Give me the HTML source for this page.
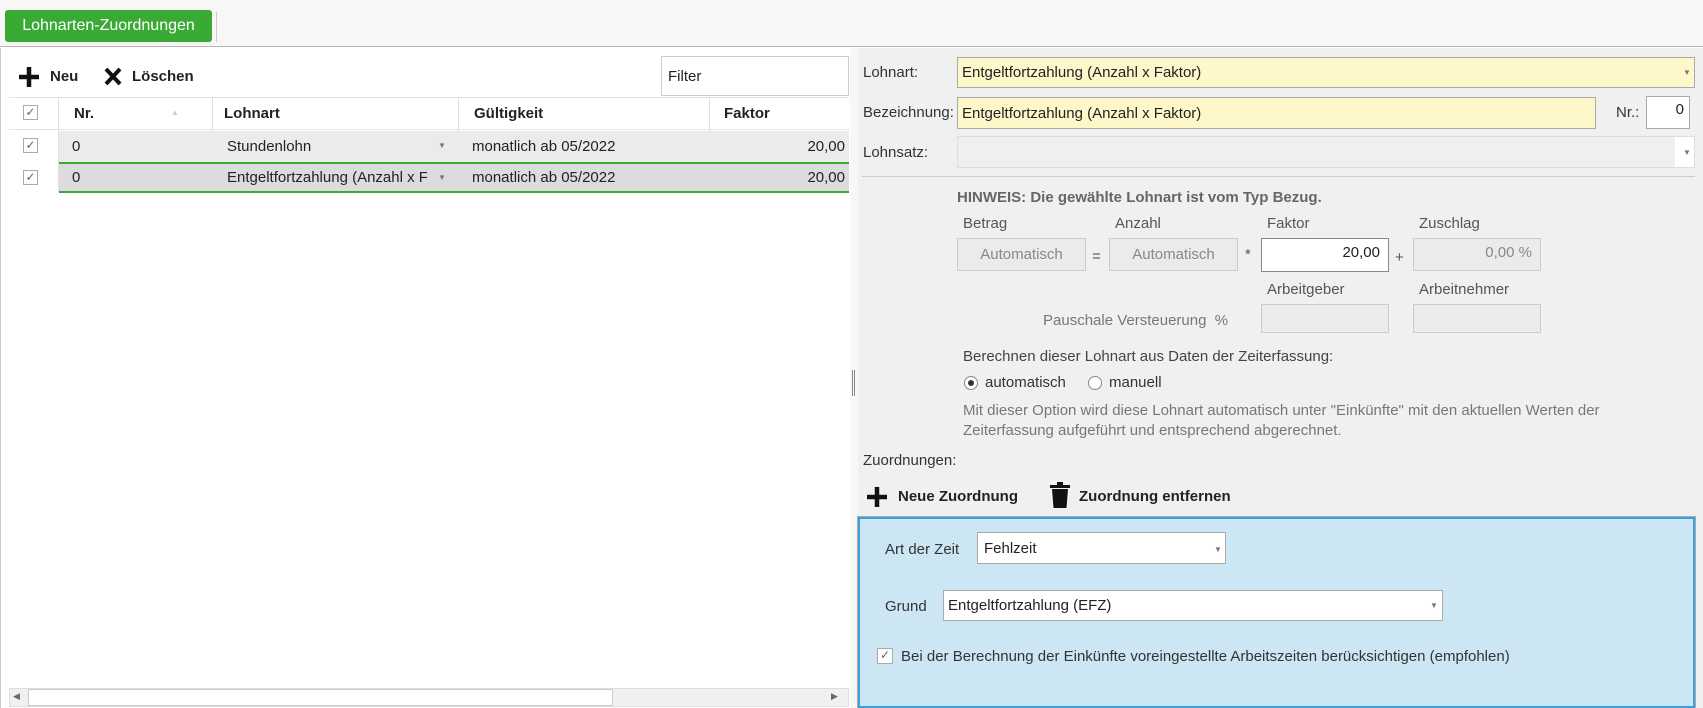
<!DOCTYPE html>
<html><head><meta charset="utf-8"><style>
*{box-sizing:border-box;margin:0;padding:0}
body{width:1703px;height:708px;overflow:hidden;background:#fff;font-family:"Liberation Sans",sans-serif;font-size:15px;color:#222;position:relative}
.a{position:absolute}
.top{left:0;top:0;width:1703px;height:47px;background:#f7f7f7;border-bottom:1px solid #b5b5b5}
.btn{left:5px;top:10px;width:207px;height:32px;background:#3aaa35;border-radius:3px;color:#fff;font-size:16px;line-height:32px;text-align:center}
.hdr{font-weight:bold;font-size:15px}
.cell{position:absolute;line-height:30px;white-space:nowrap;overflow:hidden}
.chk{width:15px;height:15px;border:1px solid #aaa;background:#fff;position:absolute;font-size:12px;line-height:13px;text-align:center;color:#666}
.right{left:858px;top:48px;width:845px;height:660px;background:#f0f0f0}
.lbl{color:#333}
.box{position:absolute;border:1px solid #ccc;background:#ebebeb;color:#888;text-align:center}
.tri{position:absolute;font-size:8px;color:#777}
</style></head><body>
<div class="a top"></div>
<div class="a btn">Lohnarten-Zuordnungen</div>
<div class="a" style="left:216px;top:12px;width:1px;height:30px;background:#ccc"></div>

<div class="a" style="left:0;top:48px;width:850px;height:660px;border-left:1px solid #ccc;background:#fff"></div>
<svg class="a" style="left:18px;top:66px" width="22" height="22" viewBox="0 0 22 22"><path d="M11 1v20M1 11h20" stroke="#111" stroke-width="4.5"/></svg>
<div class="a hdr" style="left:50px;top:68px">Neu</div>
<svg class="a" style="left:104px;top:67px" width="18" height="19" viewBox="0 0 18 19"><path d="M2 2l14 15M16 2L2 17" stroke="#111" stroke-width="4"/></svg>
<div class="a hdr" style="left:132px;top:68px">Löschen</div>
<div class="a" style="left:661px;top:56px;width:188px;height:40px;border:1px solid #ccc;background:#fff;padding:11px 6px">Filter</div>

<div class="a" style="left:9px;top:97px;width:840px;height:33px;border-bottom:1px solid #e3e3e3;border-top:1px solid #e3e3e3"></div>
<div class="a" style="left:58px;top:97px;width:1px;height:95px;background:#e0e0e0"></div>
<div class="a" style="left:212px;top:97px;width:1px;height:95px;background:#e0e0e0"></div>
<div class="a" style="left:458px;top:97px;width:1px;height:95px;background:#e0e0e0"></div>
<div class="a" style="left:709px;top:97px;width:1px;height:95px;background:#e0e0e0"></div>
<div class="chk" style="left:23px;top:105px">✓</div>
<div class="cell hdr" style="left:74px;top:99px">Nr.</div>
<div class="a" style="left:171px;top:108px;font-size:8px;color:#ccc">▲</div>
<div class="cell hdr" style="left:224px;top:99px">Lohnart</div>
<div class="cell hdr" style="left:474px;top:99px">Gültigkeit</div>
<div class="cell hdr" style="left:724px;top:99px">Faktor</div>

<div class="a" style="left:59px;top:131px;width:790px;height:31px;background:#ebebeb"></div>
<div class="chk" style="left:23px;top:138px">✓</div>
<div class="cell" style="left:72px;top:132px">0</div>
<div class="cell" style="left:227px;top:132px">Stundenlohn</div>
<div class="tri" style="left:438px;top:141px">▼</div>
<div class="cell" style="left:472px;top:132px">monatlich ab 05/2022</div>
<div class="cell" style="left:700px;top:132px;width:145px;text-align:right">20,00</div>

<div class="a" style="left:59px;top:162px;width:790px;height:31px;background:#dcdcdc;border-top:2px solid #3aaa35;border-bottom:2px solid #3aaa35"></div>
<div class="chk" style="left:23px;top:170px">✓</div>
<div class="cell" style="left:72px;top:163px">0</div>
<div class="cell" style="left:227px;top:163px;width:200px">Entgeltfortzahlung (Anzahl x Faktor)</div>
<div class="tri" style="left:438px;top:173px">▼</div>
<div class="cell" style="left:472px;top:163px">monatlich ab 05/2022</div>
<div class="cell" style="left:700px;top:163px;width:145px;text-align:right">20,00</div>

<div class="a" style="left:9px;top:688px;width:840px;height:19px;background:#f0f0f0;border:1px solid #ddd"></div>
<div class="a" style="left:28px;top:689px;width:585px;height:17px;background:#fff;border:1px solid #ccc"></div>
<div class="a" style="left:13px;top:691px;font-size:9px;color:#666">◀</div>
<div class="a" style="left:831px;top:691px;font-size:9px;color:#666">▶</div>
<div class="a" style="left:850px;top:48px;width:8px;height:660px;background:#f7f7f7"></div>
<div class="a" style="left:852px;top:370px;width:3px;height:26px;border-left:1px solid #888;border-right:1px solid #888"></div>

<div class="a right"></div>
<div class="a lbl" style="left:863px;top:64px">Lohnart:</div>
<div class="a" style="left:957px;top:57px;width:738px;height:31px;background:#fdf7c9;border:1px solid #aaa;padding:6px 4px">Entgeltfortzahlung (Anzahl x Faktor)</div>
<div class="tri" style="left:1683px;top:68px">▼</div>
<div class="a lbl" style="left:863px;top:104px">Bezeichnung:</div>
<div class="a" style="left:957px;top:97px;width:639px;height:32px;background:#fdf7c9;border:1px solid #aaa;padding:7px 4px">Entgeltfortzahlung (Anzahl x Faktor)</div>
<div class="a lbl" style="left:1616px;top:104px">Nr.:</div>
<div class="a" style="left:1646px;top:96px;width:44px;height:33px;background:#fff;border:1px solid #aaa;text-align:right;padding:4px 5px">0</div>
<div class="a lbl" style="left:863px;top:144px">Lohnsatz:</div>
<div class="a" style="left:957px;top:136px;width:738px;height:32px;background:#efefef;border:1px solid #ddd"></div>
<div class="a" style="left:1675px;top:137px;width:19px;height:30px;background:#fff"></div>
<div class="tri" style="left:1683px;top:148px">▼</div>
<div class="a" style="left:862px;top:176px;width:833px;height:1px;background:#ccc"></div>

<div class="a" style="left:957px;top:189px;font-weight:bold;color:#666;font-size:15px">HINWEIS: Die gewählte Lohnart ist vom Typ Bezug.</div>
<div class="a lbl" style="left:963px;top:215px;color:#555">Betrag</div>
<div class="a lbl" style="left:1115px;top:215px;color:#555">Anzahl</div>
<div class="a lbl" style="left:1267px;top:215px;color:#555">Faktor</div>
<div class="a lbl" style="left:1419px;top:215px;color:#555">Zuschlag</div>
<div class="box" style="left:957px;top:238px;width:129px;height:33px;line-height:31px">Automatisch</div>
<div class="a" style="left:1092px;top:248px;color:#555">=</div>
<div class="box" style="left:1109px;top:238px;width:129px;height:33px;line-height:31px">Automatisch</div>
<div class="a" style="left:1245px;top:246px;color:#555">*</div>
<div class="a" style="left:1261px;top:238px;width:128px;height:34px;background:#fff;border:1px solid #888;text-align:right;padding:5px 8px">20,00</div>
<div class="a" style="left:1395px;top:249px;color:#555">+</div>
<div class="box" style="left:1413px;top:238px;width:128px;height:33px;text-align:right;padding:5px 8px">0,00 %</div>
<div class="a" style="left:1267px;top:281px;color:#555">Arbeitgeber</div>
<div class="a" style="left:1419px;top:281px;color:#555">Arbeitnehmer</div>
<div class="a" style="left:1043px;top:312px;color:#777">Pauschale Versteuerung&nbsp; %</div>
<div class="box" style="left:1261px;top:304px;width:128px;height:29px"></div>
<div class="box" style="left:1413px;top:304px;width:128px;height:29px"></div>

<div class="a" style="left:963px;top:348px;color:#444">Berechnen dieser Lohnart aus Daten der Zeiterfassung:</div>
<div class="a" style="left:964px;top:376px;width:14px;height:14px;border:1px solid #888;border-radius:50%;background:#fff"></div>
<div class="a" style="left:968px;top:380px;width:6px;height:6px;border-radius:50%;background:#333"></div>
<div class="a" style="left:985px;top:374px;color:#333">automatisch</div>
<div class="a" style="left:1088px;top:376px;width:14px;height:14px;border:1px solid #888;border-radius:50%;background:#fff"></div>
<div class="a" style="left:1109px;top:374px;color:#333">manuell</div>
<div class="a" style="left:963px;top:401px;color:#777;line-height:20px;width:700px">Mit dieser Option wird diese Lohnart automatisch unter "Einkünfte" mit den aktuellen Werten der Zeiterfassung aufgeführt und entsprechend abgerechnet.</div>
<div class="a lbl" style="left:863px;top:452px">Zuordnungen:</div>

<svg class="a" style="left:866px;top:486px" width="22" height="22" viewBox="0 0 22 22"><path d="M11 1v20M1 11h20" stroke="#111" stroke-width="4.5"/></svg>
<div class="a hdr" style="left:898px;top:488px">Neue Zuordnung</div>
<svg class="a" style="left:1049px;top:482px" width="22" height="27" viewBox="0 0 22 27"><rect x="1" y="3" width="20" height="3" fill="#111"/><rect x="8" y="0" width="6" height="3" fill="#111"/><path d="M3 7h16l-1.5 19h-13z" fill="#111"/></svg>
<div class="a hdr" style="left:1079px;top:488px">Zuordnung entfernen</div>

<div class="a" style="left:858px;top:517px;width:837px;height:191px;background:#cce6f4;border:2px solid #3aa0e0;outline:1px solid #aaa"></div>
<div class="a" style="left:885px;top:541px;color:#333">Art der Zeit</div>
<div class="a" style="left:977px;top:532px;width:249px;height:32px;background:#fff;border:1px solid #aaa;padding:7px 6px">Fehlzeit</div>
<div class="tri" style="left:1214px;top:545px">▼</div>
<div class="a" style="left:885px;top:598px;color:#333">Grund</div>
<div class="a" style="left:943px;top:590px;width:500px;height:31px;background:#fff;border:1px solid #aaa;padding:6px 4px">Entgeltfortzahlung (EFZ)</div>
<div class="tri" style="left:1430px;top:601px">▼</div>
<div class="chk" style="left:877px;top:648px;width:16px;height:16px">✓</div>
<div class="a" style="left:901px;top:648px;color:#333">Bei der Berechnung der Einkünfte voreingestellte Arbeitszeiten berücksichtigen (empfohlen)</div>
</body></html>
